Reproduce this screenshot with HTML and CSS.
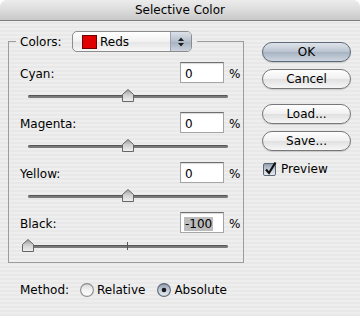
FILE: index.html
```html
<!DOCTYPE html>
<html lang="en">
<head>
  <meta charset="UTF-8">
  <title>Selective Color</title>
  <link rel="stylesheet" href="styles.css">
</head>
<body>
  <!-- shared gradients -->
  <svg class="defs" width="0" height="0">
    <defs>
      <linearGradient id="thumbGrad" x1="0" y1="0" x2="0" y2="1">
        <stop offset="0" stop-color="#9a9a9a"/>
        <stop offset=".45" stop-color="#cfcfcf"/>
        <stop offset="1" stop-color="#eef1f5"/>
      </linearGradient>
      <linearGradient id="radioOff" x1="0" y1="0" x2="0" y2="1">
        <stop offset="0" stop-color="#d6d6d6"/>
        <stop offset=".5" stop-color="#f2f2f2"/>
        <stop offset="1" stop-color="#ffffff"/>
      </linearGradient>
      <linearGradient id="radioOn" x1="0" y1="0" x2="0" y2="1">
        <stop offset="0" stop-color="#8d9aab"/>
        <stop offset=".5" stop-color="#c4ccd7"/>
        <stop offset="1" stop-color="#e9edf2"/>
      </linearGradient>
    </defs>
  </svg>

  <div class="window">
    <div class="titlebar">Selective Color</div>

    <div class="content">
      <div class="left">
        <fieldset class="group">
          <legend class="legend">
            <span class="legend-label">Colors:</span>
            <span class="popup">
              <span class="swatch"></span>
              <span class="popup-text">Reds</span>
              <span class="popup-arrows">
                <svg width="8" height="12" viewBox="0 0 8 12"><path d="M1 5 L4 1.5 L7 5 Z M1 7 L4 10.5 L7 7 Z" fill="#1e1e1e"/></svg>
              </span>
            </span>
          </legend>

          <div class="row">
            <div class="field"><span class="label">Cyan:</span><span class="input">0</span><span class="pct">%</span></div>
            <div class="slider">
              <div class="track"></div>
              <svg class="thumb mid" width="12" height="13" viewBox="0 0 12 13"><path d="M6 .5 L11.5 5.5 V12.5 H.5 V5.5 Z" fill="url(#thumbGrad)" stroke="#666"/></svg>
            </div>
          </div>

          <div class="row">
            <div class="field"><span class="label">Magenta:</span><span class="input">0</span><span class="pct">%</span></div>
            <div class="slider">
              <div class="track"></div>
              <svg class="thumb mid" width="12" height="13" viewBox="0 0 12 13"><path d="M6 .5 L11.5 5.5 V12.5 H.5 V5.5 Z" fill="url(#thumbGrad)" stroke="#666"/></svg>
            </div>
          </div>

          <div class="row">
            <div class="field"><span class="label">Yellow:</span><span class="input">0</span><span class="pct">%</span></div>
            <div class="slider">
              <div class="track"></div>
              <svg class="thumb mid" width="12" height="13" viewBox="0 0 12 13"><path d="M6 .5 L11.5 5.5 V12.5 H.5 V5.5 Z" fill="url(#thumbGrad)" stroke="#666"/></svg>
            </div>
          </div>

          <div class="row">
            <div class="field"><span class="label">Black:</span><span class="input"><span class="selected">-100</span></span><span class="pct">%</span></div>
            <div class="slider">
              <div class="track"></div>
              <div class="tick"></div>
              <svg class="thumb start" width="12" height="13" viewBox="0 0 12 13"><path d="M6 .5 L11.5 5.5 V12.5 H.5 V5.5 Z" fill="url(#thumbGrad)" stroke="#666"/></svg>
            </div>
          </div>
        </fieldset>

        <div class="method">
          <span class="method-label">Method:</span>
          <span class="radio">
            <svg width="14" height="14" viewBox="0 0 14 14"><circle cx="7" cy="7" r="6.4" fill="url(#radioOff)" stroke="#8a8a8a" stroke-width="1.1"/></svg>
            Relative
          </span>
          <span class="radio">
            <svg width="14" height="14" viewBox="0 0 14 14"><circle cx="7" cy="7" r="6.4" fill="url(#radioOn)" stroke="#5d6877" stroke-width="1.1"/><circle cx="7" cy="7" r="2.3" fill="#1b1b1b"/></svg>
            Absolute
          </span>
        </div>
      </div>

      <div class="right">
        <div class="btn btn-default">OK</div>
        <div class="btn">Cancel</div>
        <div class="btn btn-gap">Load...</div>
        <div class="btn">Save...</div>
        <div class="check">
          <svg width="16" height="16" viewBox="0 0 16 16">
            <rect x="1.5" y="2.5" width="12" height="12" rx="1.5" fill="url(#radioOn)" stroke="#5d6877"/>
            <path d="M4 8.5 L7 12 L13.5 1.5" fill="none" stroke="#111" stroke-width="2.2"/>
          </svg>
          Preview
        </div>
      </div>
    </div>
  </div>
</body>
</html>
```

FILE: styles.css
```css
* { margin:0; padding:0; box-sizing:border-box; }
html, body {
  width:360px; height:316px;
  background:#fff;
  overflow:hidden;
  font-family:"DejaVu Sans", sans-serif;
  font-size:12px; color:#000;
}
.defs { position:absolute; }

/* Janela */
.window {
  width:360px; height:316px;
  display:flex; flex-direction:column;
  background:repeating-linear-gradient(#eeeeee 0, #eeeeee 2px, #e8e8e8 2px, #e8e8e8 4px);
  border-radius:7px 7px 0 0;
  overflow:hidden;
}
.titlebar {
  height:21px;
  display:flex; align-items:center; justify-content:center;
  background:linear-gradient(#ececec, #dcdcdc 50%, #c9c9c9);
  border-bottom:1px solid #7d7d7d;
  padding-bottom:1px;
}
.content { flex:1; display:flex; }

/* Coluna esquerda */
.left { width:254px; }
.group {
  width:236px;
  margin:10px 0 0 8px;
  border:1px solid #9c9c9c;
  padding:10px 4px 0 11px;
}
.legend {
  display:flex; align-items:center;
  margin-left:-4px;
  padding:0 5px 0 4px;
  height:21px;
}
.legend-label { width:52px; padding-top:1px; }
.popup {
  width:120px; height:21px;
  display:flex; align-items:center;
  border:1px solid #8c8c8c; border-radius:5px;
  background:linear-gradient(#ffffff, #f1f1f1 50%, #e4e4e4 51%, #f7f7f7);
  overflow:hidden;
}
.swatch {
  width:15px; height:14px;
  margin-left:9px;
  background:#e00000;
  border:1px solid #6e0000;
}
.popup-text { flex:1; padding-left:3px; padding-top:1px; }
.popup-arrows {
  width:21px; height:100%;
  display:flex; align-items:center; justify-content:center;
  border-left:1px solid #9aa3ae;
  background:linear-gradient(#dde2e9, #b4bfcc 50%, #a5b1c0 51%, #cbd3dd);
}

.row { height:50px; }
.field { height:21px; display:flex; align-items:center; }
.label { flex:1; padding-top:2px; }
.input {
  width:44px; height:21px;
  display:flex; align-items:center;
  padding:2px 0 0 4px;
  background:#fff;
  border:1px solid #a5a5a5; border-top-color:#6f6f6f;
  box-shadow:inset 0 1px 1px rgba(0,0,0,.15);
}
.selected { background:#bcbcbc; padding:0 1px; margin-left:-1px; }
.pct { width:15px; padding:2px 0 0 5px; }

.slider { position:relative; height:29px; padding-top:12px; }
.track {
  margin-left:8px;
  width:200px; height:3px;
  border-radius:2px;
  background:#7a7a7a;
  border-top:1px solid #555;
}
.tick {
  position:absolute; left:107px; top:9px;
  width:1px; height:8px;
  background:#555;
}
.thumb { position:absolute; top:6px; }
.thumb.mid { left:102px; }
.thumb.start { left:2px; }

/* Método */
.method {
  display:flex; align-items:center;
  height:20px;
  margin-top:17px;
  padding-left:20px;
}
.method-label { width:60px; }
.radio { display:flex; align-items:center; gap:3px; margin-right:12px; }

/* Coluna direita */
.right { padding:21px 0 0 8px; }
.btn {
  width:89px; height:20px;
  display:flex; align-items:center; justify-content:center;
  margin-bottom:7px;
  border:1px solid #777; border-radius:10px;
  background:linear-gradient(#fefefe, #f0f0f0 50%, #e0e0e0 51%, #f6f6f6);
  box-shadow:0 1px 1px rgba(0,0,0,.15);
}
.btn-default {
  background:linear-gradient(#dfe4eb, #b9c3d0 50%, #a7b3c3 51%, #cdd5df);
  border-color:#5f6a78;
}
.btn-gap { margin-top:15px; }
.check {
  display:flex; align-items:center; gap:3px;
  margin-top:9px;
  height:18px;
}
```
